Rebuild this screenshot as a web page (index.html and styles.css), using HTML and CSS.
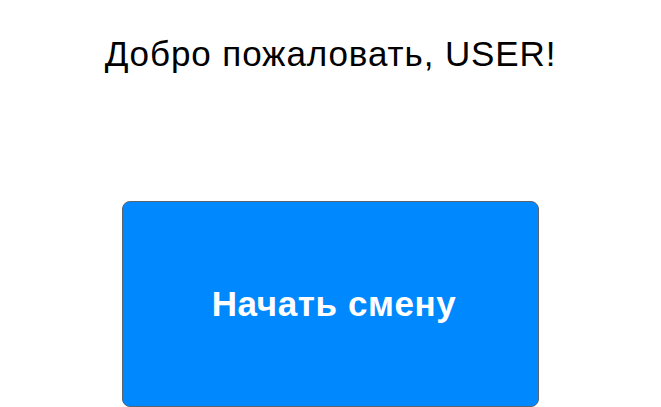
FILE: index.html
```html
<!DOCTYPE html>
<html lang="ru">
<head>
<meta charset="utf-8">
<link rel="stylesheet" href="styles.css">
</head>
<body>
<main class="page">
  <h1 class="title">Добро пожаловать, USER!</h1>
  <button class="start">Начать смену</button>
</main>
</body>
</html>
```
FILE: styles.css
```css
html, body {
  margin: 0;
  padding: 0;
  background: #ffffff;
}
.page {
  display: flex;
  flex-direction: column;
  align-items: center;
  font-family: "Liberation Sans", Arial, sans-serif;
}
.title {
  margin: 34px 0 0 0;
  font-size: 35px;
  font-weight: 400;
  line-height: 40px;
  letter-spacing: 0.9px;
  color: #000;
}
.start {
  margin-top: 127px;
  margin-left: -1px;
  width: 417px;
  height: 206px;
  padding: 0 0 0 8px;
  background: #0088ff;
  color: #fff;
  border: 1px solid #5a6470;
  border-radius: 8px;
  font-family: "Liberation Sans", Arial, sans-serif;
  font-size: 35px;
  font-weight: 700;
  letter-spacing: 0.6px;
}
```
